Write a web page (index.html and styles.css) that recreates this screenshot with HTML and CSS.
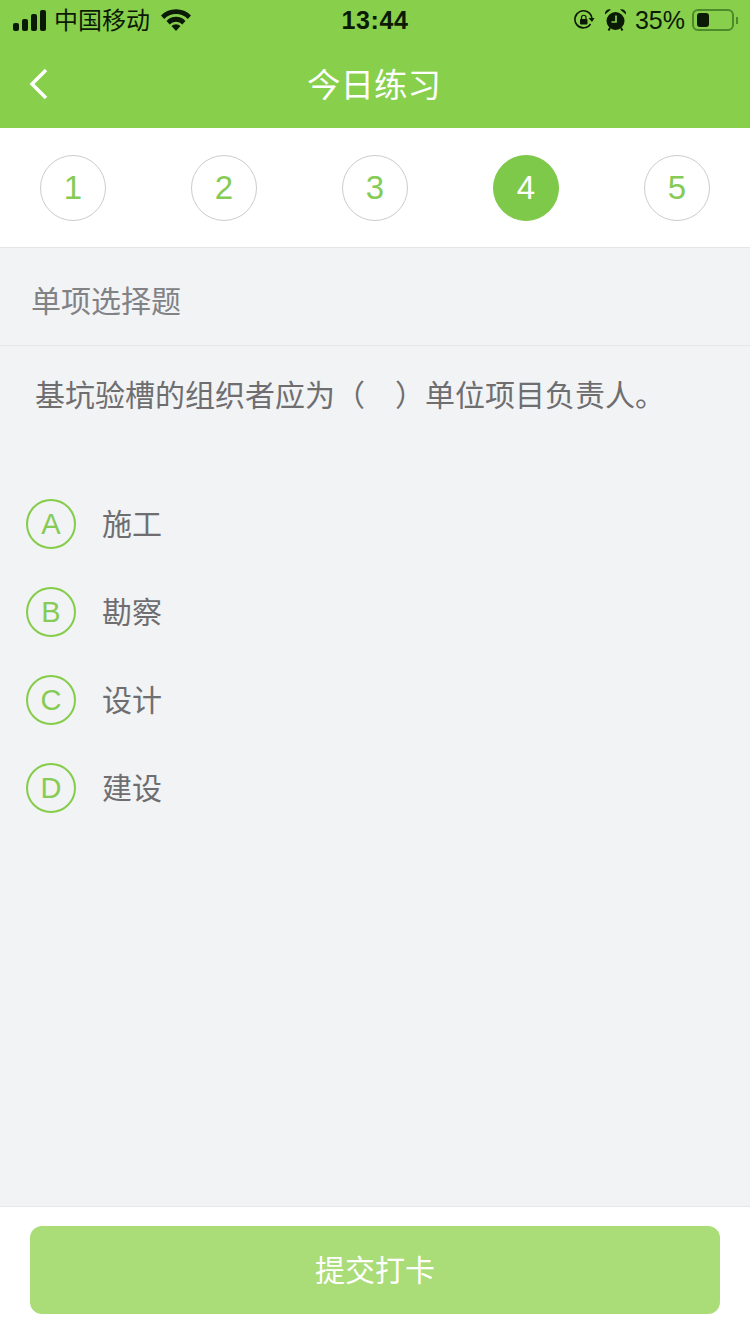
FILE: index.html
```html
<!DOCTYPE html>
<html lang="zh">

<head>
  <meta charset="UTF-8">
  <meta name="viewport" content="width=device-width, initial-scale=1.0">
  <title>今日练习</title>
  <link rel="stylesheet" href="styles.css">
</head>

<body>
  <header>
    <div class="status-bar">
      <div class="status-left">
        <span class="signal"><i class="s1"></i><i class="s2"></i><i class="s3"></i><i class="s4"></i></span>
        <span class="carrier">中国移动</span>
        <svg class="wifi" width="30" height="23" viewBox="0 0 30 23">
          <path d="M0 7.500 A21 21 0 0 1 30 7.500 L26.800 11 A16.500 16.500 0 0 0 3.200 11 Z" fill="#0b1a05"/>
          <path d="M5.500 13 A13 13 0 0 1 24.500 13 L21.300 16.500 A8.500 8.500 0 0 0 8.700 16.500 Z" fill="#0b1a05"/>
          <path d="M10.500 18 A6.500 6.500 0 0 1 19.500 18 L15 23 Z" fill="#0b1a05"/>
        </svg>
      </div>
      <div class="status-time">13:44</div>
      <div class="status-right">
        <svg class="lock" width="22" height="22" viewBox="0 0 22 22">
          <path d="M17.500 15 A8.500 8.500 0 1 1 18.800 9" fill="none" stroke="#0b1a05" stroke-width="1.600"/>
          <path d="M15.500 9 L21.500 9 L19 13 Z" fill="#0b1a05"/>
          <rect x="7" y="10" width="7.500" height="5.500" rx="1" fill="#0b1a05"/>
          <path d="M8.500 10 V8.500 A2.200 2.200 0 0 1 13 8.500 V10" fill="none" stroke="#0b1a05" stroke-width="1.200"/>
        </svg>
        <svg class="alarm" width="21" height="22" viewBox="0 0 21 22">
          <circle cx="10.500" cy="12" r="9" fill="#0b1a05"/>
          <path d="M0 5.500 A4.500 4.500 0 0 1 6 0.500 Z M21 5.500 A4.500 4.500 0 0 0 15 0.500 Z" fill="#0b1a05"/>
          <path d="M11 6.500 V13 H6.500" fill="none" stroke="#88cf4c" stroke-width="1.700"/>
          <path d="M5 19 L3.500 21.500 M16 19 L17.500 21.500" stroke="#0b1a05" stroke-width="2"/>
        </svg>
        <span class="percent">35%</span>
        <span class="battery"><i></i></span>
        <span class="battery-cap"></span>
      </div>
    </div>
    <div class="title-bar">
      <svg class="back" width="20" height="32" viewBox="0 0 20 32">
        <path d="M17 2 L3 16 L17 30" fill="none" stroke="#fff" stroke-width="3.500"/>
      </svg>
      <h1>今日练习</h1>
    </div>
  </header>

  <nav class="steps">
    <span class="step">1</span>
    <span class="step">2</span>
    <span class="step">3</span>
    <span class="step active">4</span>
    <span class="step">5</span>
  </nav>

  <main>
    <div class="q-type">单项选择题</div>
    <p class="question">基坑验槽的组织者应为（<span class="blank"></span>）单位项目负责人。</p>
    <ul class="options">
      <li class="option"><span class="letter">A</span><span class="text">施工</span></li>
      <li class="option"><span class="letter">B</span><span class="text">勘察</span></li>
      <li class="option"><span class="letter">C</span><span class="text">设计</span></li>
      <li class="option"><span class="letter">D</span><span class="text">建设</span></li>
    </ul>
  </main>

  <footer>
    <button class="submit" type="button">提交打卡</button>
  </footer>
</body>

</html>
```

FILE: styles.css
```css
* {
  box-sizing: border-box;
  margin: 0;
  padding: 0;
}

html,
body {
  height: 100%;
}

body {
  width: 750px;
  height: 1334px;
  display: flex;
  flex-direction: column;
  font-family: "Liberation Sans", "Noto Sans CJK SC", sans-serif;
  background-color: #f2f3f5;
  overflow: hidden;
}

header {
  height: 128px;
  background-color: #88cf4c;
}

.status-bar {
  height: 40px;
  display: flex;
  justify-content: space-between;
  align-items: center;
  padding: 0 12px 0 13px;
  color: #0b1a05;
  position: relative;
}

.status-left,
.status-right {
  display: flex;
  align-items: center;
}

.signal {
  display: flex;
  align-items: flex-end;
  gap: 3px;
  height: 21px;
}

.signal i {
  width: 6px;
  border-radius: 2px;
  background-color: #0b1a05;
}

.signal .s1 { height: 8px; }
.signal .s2 { height: 12px; }
.signal .s3 { height: 17px; }
.signal .s4 { height: 21px; }

.carrier {
  font-size: 24px;
  margin-left: 8px;
  padding-bottom: 4px;
}

.wifi {
  margin-left: 11px;
  margin-bottom: 1px;
}

.status-time {
  position: absolute;
  left: 0;
  right: 0;
  text-align: center;
  font-size: 25px;
  font-weight: 700;
  letter-spacing: 0.6px;
  pointer-events: none;
}

.lock {
  margin-right: 10px;
}

.alarm {
  margin-right: 9px;
}

.percent {
  font-size: 25px;
}

.battery {
  width: 42px;
  height: 22px;
  margin-left: 7px;
  padding: 2px 3px;
  border: 2px solid #4f8a2a;
  border-radius: 6px;
  display: flex;
}

.battery i {
  width: 12px;
  border-radius: 3px;
  background-color: #0b1a05;
}

.battery-cap {
  width: 2px;
  height: 7px;
  margin-left: 2px;
  background-color: #4f8a2a;
}

.title-bar {
  height: 88px;
  display: flex;
  justify-content: center;
  align-items: center;
  position: relative;
  padding: 0 2px 4px 0;
}

.back {
  position: absolute;
  left: 29px;
  top: 28px;
}

.title-bar h1 {
  font-size: 33.500px;
  font-weight: 400;
  color: #fff;
}

.steps {
  height: 120px;
  display: flex;
  justify-content: space-between;
  align-items: center;
  padding: 0 40px;
  background-color: #fff;
  border-bottom: 1px solid #e6e6e6;
}

.step {
  width: 66px;
  height: 66px;
  display: flex;
  justify-content: center;
  align-items: center;
  border: 1px solid #ccc;
  border-radius: 50%;
  font-size: 33px;
  color: #86cb55;
}

.step.active {
  background-color: #7fc94a;
  border-color: #7fc94a;
  color: #fff;
}

main {
  flex: 1;
}

.q-type {
  height: 98px;
  line-height: 108px;
  padding-left: 31px;
  font-size: 30px;
  color: #808285;
  border-bottom: 1px solid #e6e7e9;
}

.question {
  padding: 29px 0 0 35px;
  font-size: 30px;
  line-height: 42px;
  color: #6e6e70;
  white-space: nowrap;
}

.blank {
  display: inline-block;
  width: 30px;
}

.options {
  list-style: none;
  margin-top: 63px;
  padding-left: 26px;
}

.option {
  height: 88px;
  display: flex;
  align-items: center;
}

.letter {
  width: 50px;
  height: 50px;
  display: flex;
  justify-content: center;
  align-items: center;
  border: 2px solid #84cc4a;
  border-radius: 50%;
  font-size: 29px;
  color: #86cb55;
}

.text {
  margin-left: 26px;
  padding-bottom: 4px;
  font-size: 30px;
  color: #6e6e70;
}

footer {
  height: 128px;
  padding: 19px 30px;
  background-color: #fff;
  border-top: 1px solid #e6e7e9;
}

.submit {
  display: block;
  width: 690px;
  height: 88px;
  padding-bottom: 4px;
  border: 0;
  border-radius: 12px;
  background-color: #aadc78;
  color: #fff;
  font-family: inherit;
  font-size: 30px;
}
```
